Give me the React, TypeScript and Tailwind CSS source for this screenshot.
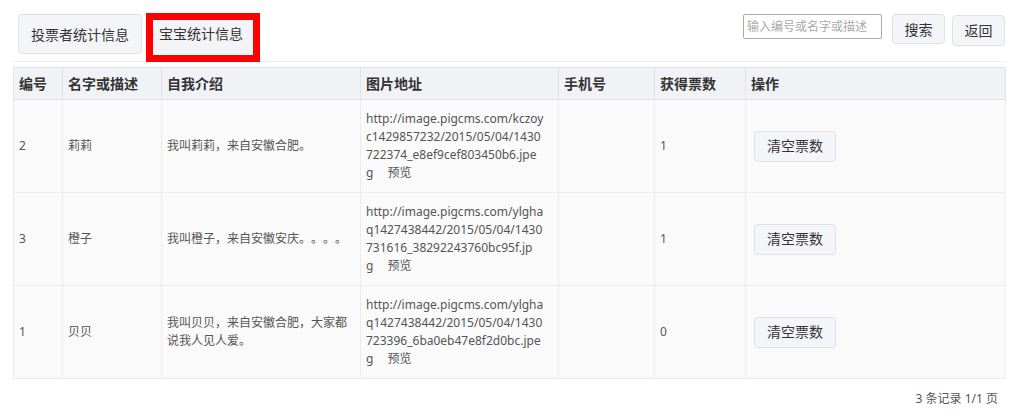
import React from "react";

const rows = [
  {
    id: "2",
    name: "莉莉",
    intro: ["我叫莉莉，来自安徽合肥。"],
    url: ["http://image.pigcms.com/kczoy", "c1429857232/2015/05/04/1430", "722374_e8ef9cef803450b6.jpe"],
    votes: "1",
  },
  {
    id: "3",
    name: "橙子",
    intro: ["我叫橙子，来自安徽安庆。。。。"],
    url: ["http://image.pigcms.com/ylgha", "q1427438442/2015/05/04/1430", "731616_38292243760bc95f.jp"],
    votes: "1",
  },
  {
    id: "1",
    name: "贝贝",
    intro: ["我叫贝贝，来自安徽合肥，大家都", "说我人见人爱。"],
    url: ["http://image.pigcms.com/ylgha", "q1427438442/2015/05/04/1430", "723396_6ba0eb47e8f2d0bc.jpe"],
    votes: "0",
  },
];

export default function App() {
  return (
    <div
      className="w-[1017px] h-[417px] bg-white text-[#555] [text-spacing-trim:space-all]"
      style={{ fontFamily: '"Noto Sans", "Noto Sans CJK SC", sans-serif' }}
    >
      <div className="ml-[13px] w-[992px]">
        <div className="h-[62px] border-b border-[#eeeeee] flex items-start">
          <button className="ml-[5px] mt-[14px] w-[124px] h-[40px] rounded-[4px] border border-[#dfe1e7] bg-[#f4f5f9] text-[14px] text-[#333]">
            投票者统计信息
          </button>
          <div className="relative z-10 ml-[4px] mt-[13px] w-[114px] h-[49px] border-[7px] border-[#ff0000] bg-white">
            <div className="w-full h-[34px] bg-[#f3f4f8] pt-[4px] pl-[6px] text-[14px] leading-[20px] text-[#333]">
              宝宝统计信息
            </div>
          </div>
          <div className="flex-1" />
          <input
            placeholder="输入编号或名字或描述"
            className="mt-[14px] w-[139px] h-[25px] border border-[#a9a9a9] rounded-[2px] px-[3px] text-[12px] placeholder:text-[#aaa] outline-none"
          />
          <button className="ml-[10px] mt-[14px] w-[53px] h-[30px] rounded-[4px] border border-[#dfe1e7] bg-[#f4f5f9] text-[14px] text-[#333]">
            搜索
          </button>
          <button className="ml-[7px] mt-[15px] w-[53px] h-[31px] rounded-[4px] border border-[#dfe1e7] bg-[#f4f5f9] text-[14px] text-[#333]">
            返回
          </button>
        </div>

        <table className="mt-[5px] w-[992px] border-collapse table-fixed">
          <colgroup>
            <col className="w-[49px]" />
            <col className="w-[99px]" />
            <col className="w-[199px]" />
            <col className="w-[198px]" />
            <col className="w-[96px]" />
            <col className="w-[91px]" />
            <col className="w-[260px]" />
          </colgroup>
          <thead>
            <tr className="h-[32px] bg-[#f1f2f6] border border-[#e0e3ea]">
              {["编号", "名字或描述", "自我介绍", "图片地址", "手机号", "获得票数", "操作"].map((h) => (
                <th
                  key={h}
                  className="border border-[#e0e3ea] px-[5px] py-0 text-left text-[14px] leading-[20px] font-bold text-[#333]"
                >
                  {h}
                </th>
              ))}
            </tr>
          </thead>
          <tbody>
            {rows.map((r) => (
              <tr key={r.id} className="bg-[#fafafa] text-[12px] leading-[18px]">
                <td className="border border-[#ececec] px-[5px] py-[10px] align-middle">{r.id}</td>
                <td className="border border-[#ececec] px-[5px] py-[10px] align-middle">{r.name}</td>
                <td className="border border-[#ececec] px-[5px] py-[10px] align-middle">
                  {r.intro.map((l, i) => (
                    <div key={i}>{l}</div>
                  ))}
                </td>
                <td className="border border-[#ececec] px-[5px] py-[10px] align-middle">
                  {r.url.map((l, i) => (
                    <div key={i} className="whitespace-nowrap">{l}</div>
                  ))}
                  <div>
                    g<span className="ml-[14px]">预览</span>
                  </div>
                </td>
                <td className="border border-[#ececec] px-[5px] py-[10px] align-middle"></td>
                <td className="border border-[#ececec] px-[5px] py-[10px] align-middle">{r.votes}</td>
                <td className="border border-[#ececec] px-[5px] py-[10px] align-middle">
                  <button className="ml-[3px] w-[82px] h-[31px] rounded-[4px] border border-[#dfe1e7] bg-[#f4f5f9] text-[14px] text-[#333]">
                    清空票数
                  </button>
                </td>
              </tr>
            ))}
          </tbody>
        </table>

        <div className="flex justify-end pr-[7px] mt-[11px] text-[12px] text-[#555]">3 条记录 1/1 页</div>
      </div>
    </div>
  );
}
